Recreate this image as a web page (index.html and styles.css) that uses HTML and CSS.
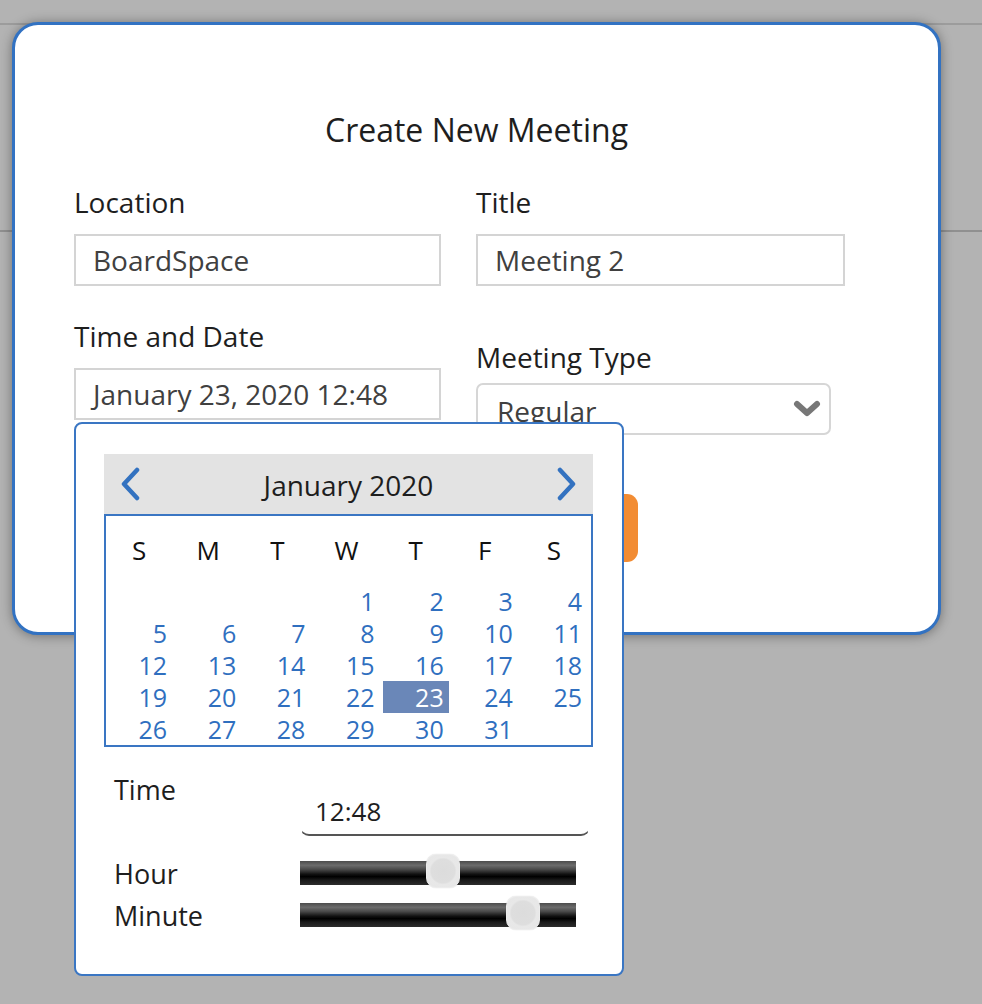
FILE: index.html
```html
<!DOCTYPE html>
<html>
<head>
<meta charset="utf-8">
<link rel="stylesheet" href="styles.css">
</head>
<body>
<div class="bg-bar"></div>
<div class="bg-band"></div>

<div class="modal">
  <h1 class="modal-title">Create New Meeting</h1>
  <div class="form">
    <div class="col">
      <div class="label">Location</div>
      <div class="field">BoardSpace</div>
      <div class="label label-next">Time and Date</div>
      <div class="field">January 23, 2020 12:48</div>
    </div>
    <div class="col">
      <div class="label">Title</div>
      <div class="field field-wide">Meeting 2</div>
      <div class="label label-type">Meeting Type</div>
      <div class="select">
        <span>Regular</span>
        <svg class="select-chevron" width="28" height="18" viewBox="0 0 28 18"><polyline points="4,4 14,13 24,4" fill="none" stroke="#777" stroke-width="6" stroke-linecap="round" stroke-linejoin="round"/></svg>
      </div>
      <div class="btn-create">Create</div>
    </div>
  </div>
</div>

<div class="picker">
  <div class="cal-head">
    <svg width="22" height="34" viewBox="0 0 22 34"><polyline points="18,3 5,17 18,31" fill="none" stroke="#3372c0" stroke-width="4.5" stroke-linecap="round" stroke-linejoin="round"/></svg>
    <span class="cal-month">January 2020</span>
    <svg width="22" height="34" viewBox="0 0 22 34"><polyline points="4,3 17,17 4,31" fill="none" stroke="#3372c0" stroke-width="4.5" stroke-linecap="round" stroke-linejoin="round"/></svg>
  </div>
  <div class="cal-box">
    <div class="cal-grid cal-week">
      <span>S</span><span>M</span><span>T</span><span>W</span><span>T</span><span>F</span><span>S</span>
    </div>
    <div class="cal-grid cal-days">
      <span></span><span></span><span></span><span>1</span><span>2</span><span>3</span><span>4</span>
      <span>5</span><span>6</span><span>7</span><span>8</span><span>9</span><span>10</span><span>11</span>
      <span>12</span><span>13</span><span>14</span><span>15</span><span>16</span><span>17</span><span>18</span>
      <span>19</span><span>20</span><span>21</span><span>22</span><span class="sel">23</span><span>24</span><span>25</span>
      <span>26</span><span>27</span><span>28</span><span>29</span><span>30</span><span>31</span><span></span>
    </div>
  </div>
  <div class="time-grid">
    <div class="t-label">Time</div>
    <div class="time-field">12:48</div>
    <div class="t-label s-label s-first">Hour</div>
    <div class="slider s-first"><div class="thumb" style="left:126px"></div></div>
    <div class="t-label s-label s-next">Minute</div>
    <div class="slider s-next"><div class="thumb" style="left:206px"></div></div>
  </div>
</div>
</body>
</html>
```

FILE: styles.css
```css
html, body {
  margin: 0;
  padding: 0;
}
body {
  background: #b3b3b3;
  font-family: "Open Sans", "Noto Sans", sans-serif;
  color: #222;
  width: 982px;
  height: 1004px;
  overflow: hidden;
  position: relative;
}
.bg-bar {
  height: 23px;
  border-bottom: 2px solid #9c9c9c;
}
.bg-band {
  height: 205px;
  border-bottom: 2px solid #909090;
}

.modal {
  position: absolute;
  left: 12px;
  top: 22px;
  width: 929px;
  height: 613px;
  box-sizing: border-box;
  border: 3px solid #3272c2;
  border-radius: 26px;
  background: #fff;
  box-shadow: 0 1px 12px rgba(0, 0, 0, 0.38);
  padding-top: 84px;
}
.modal-title {
  margin: 0;
  font-size: 32px;
  line-height: 42px;
  font-weight: 400;
  text-align: center;
  color: #1e1e1e;
}
.form {
  display: grid;
  grid-template-columns: 367px 369px;
  column-gap: 35px;
  margin: 33px 0 0 59px;
}
.col {
  display: flex;
  flex-direction: column;
  align-items: flex-start;
}
.label {
  font-size: 28px;
  line-height: 36px;
  color: #1e1e1e;
  margin-bottom: 14px;
}
.label-next {
  margin-top: 32px;
}
.label-type {
  margin-top: 53px;
  margin-bottom: 8px;
}
.field {
  box-sizing: border-box;
  width: 367px;
  height: 52px;
  border: 2px solid #d4d4d4;
  padding-left: 17px;
  display: flex;
  align-items: center;
  font-size: 28px;
  color: #404040;
}
.field-wide {
  width: 369px;
}
.select {
  box-sizing: border-box;
  width: 355px;
  height: 52px;
  border: 2px solid #d6d6d6;
  border-radius: 7px;
  padding: 0 8px 0 19px;
  display: flex;
  align-items: center;
  justify-content: space-between;
  font-size: 28px;
  color: #404040;
}
.select span {
  padding-top: 4px;
}
.btn-create {
  margin-top: 59px;
  width: 162px;
  height: 68px;
  border-radius: 11px;
  background: #f28c33;
  color: #fff;
  font-size: 26px;
  display: flex;
  align-items: center;
  justify-content: center;
}

.picker {
  position: absolute;
  left: 74px;
  top: 422px;
  width: 550px;
  height: 554px;
  box-sizing: border-box;
  border: 2px solid #3a76c3;
  border-radius: 8px;
  background: #fff;
  padding: 30px 29px 0 28px;
}
.cal-head {
  height: 60px;
  background: #e3e3e3;
  display: flex;
  align-items: center;
  justify-content: space-between;
  padding: 0 15px 0 15px;
}
.cal-month {
  font-size: 28px;
  color: #1e1e1e;
  padding-top: 2px;
}
.cal-box {
  border: 2px solid #3a76c3;
  padding: 18px 4px 0 0;
  height: 211px;
  box-sizing: content-box;
}
.cal-grid {
  display: grid;
  grid-template-columns: repeat(7, 1fr);
  column-gap: 3px;
}
.cal-week {
  height: 32px;
  margin-bottom: 19px;
}
.cal-week span {
  text-align: center;
  font-size: 26px;
  font-weight: 500;
  line-height: 32px;
  color: #111;
}
.cal-days span {
  text-align: right;
  padding-right: 5px;
  font-size: 25px;
  line-height: 32px;
  height: 32px;
  color: #2f6fbf;
}
.cal-days .sel {
  background: #6a87b8;
  color: #fff;
}

.time-grid {
  display: grid;
  grid-template-columns: 186px 290px;
  margin: 25px 0 0 10px;
  align-items: start;
}
.t-label {
  font-size: 27px;
  line-height: 36px;
  color: #1e1e1e;
}
.time-field {
  box-sizing: border-box;
  margin-top: 16px;
  height: 48px;
  border: 1px solid transparent;
  border-bottom: 2px solid #555;
  border-radius: 0 0 9px 9px;
  padding-left: 14px;
  font-size: 26px;
  line-height: 44px;
  color: #1e1e1e;
}
.s-label {
  line-height: 28px;
  padding-top: 6px;
}
.s-first {
  margin-top: 18px;
}
.s-next {
  margin-top: 8px;
}
.slider {
  position: relative;
  width: 276px;
  height: 34px;
}
.slider::before {
  content: "";
  position: absolute;
  left: 0;
  right: 0;
  top: 7px;
  height: 24px;
  background: linear-gradient(to bottom, #4c4c4c 0%, #6c6c6c 18%, #4a4a4a 35%, #111 55%, #000 65%, #1a1a1a 80%, #2c2c2c 100%);
}
.thumb {
  position: absolute;
  top: 0;
  width: 34px;
  height: 34px;
  box-sizing: border-box;
  border-radius: 10px;
  border: 1px solid #ececec;
  background: radial-gradient(circle at 50% 50%, #dcdcdc 0, #dedede 52%, #e8e8e8 60%, #e6e6e6 100%);
  box-shadow: 0 0 1px rgba(0, 0, 0, 0.2);
}
```
